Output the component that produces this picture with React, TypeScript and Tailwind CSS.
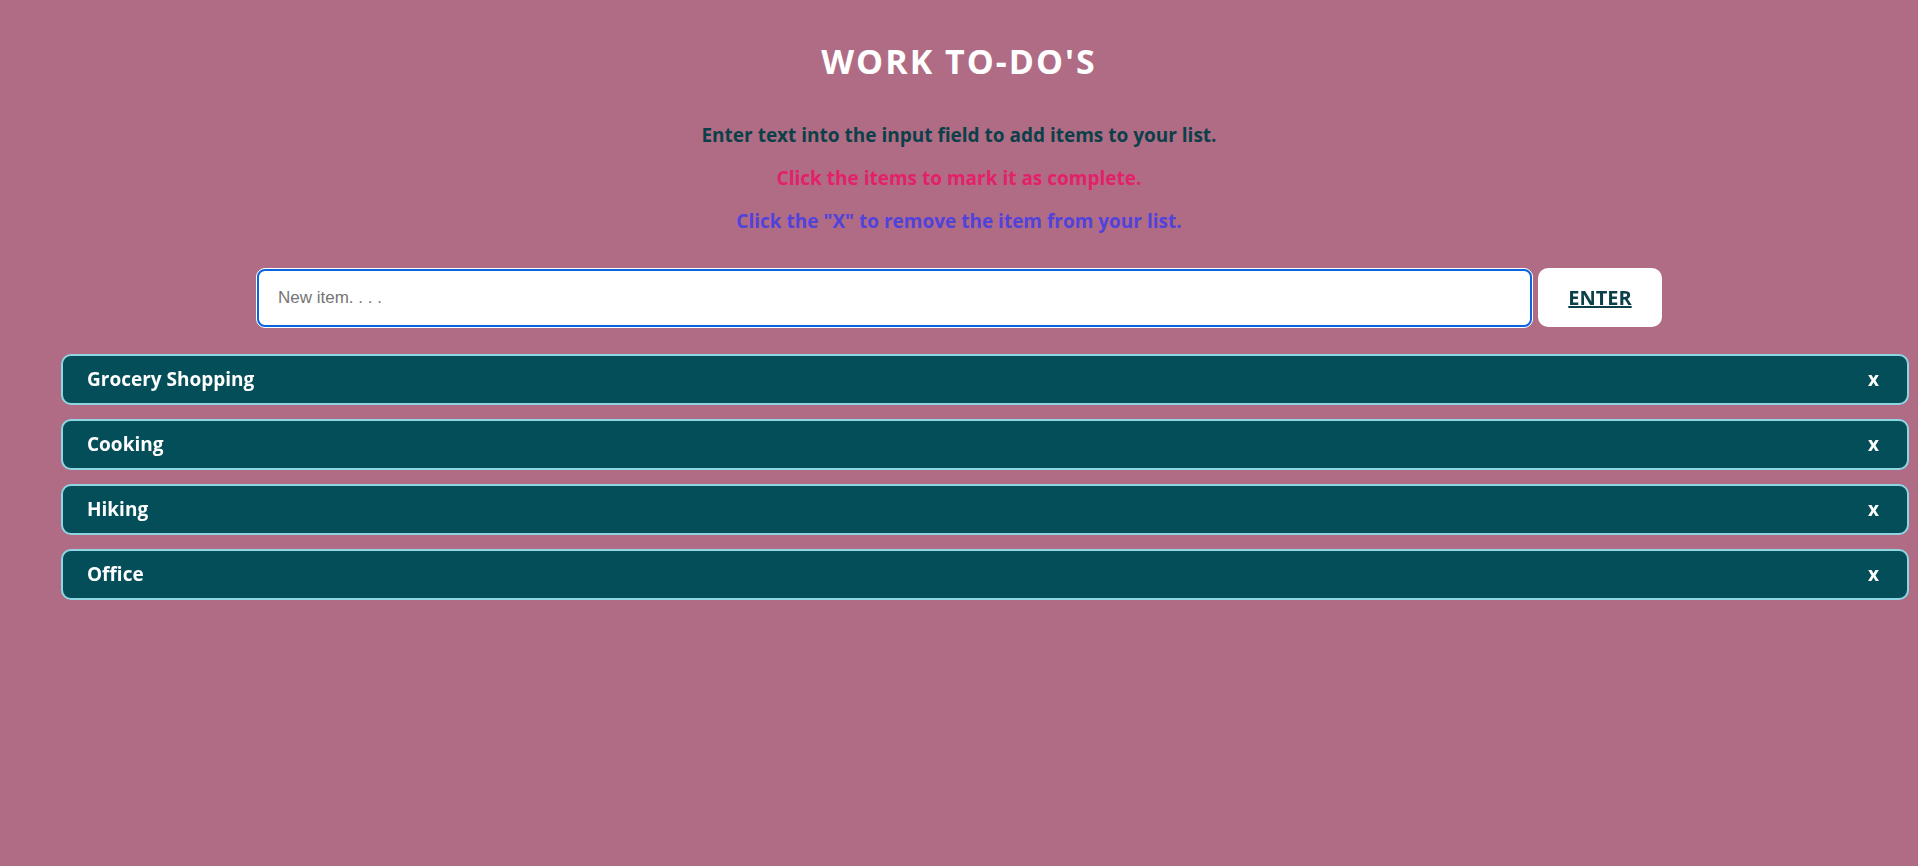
import React from "react";

const items = ["Grocery Shopping", "Cooking", "Hiking", "Office"];

export default function App() {
  return (
    <div
      className="min-h-[866px] w-full bg-[#b06c84] pt-[40px]"
      style={{ fontFamily: '"Trebuchet MS", "Open Sans", "Noto Sans", sans-serif' }}
    >
      <h1 className="text-center text-[34px] font-bold leading-[42px] tracking-[2px] text-white">WORK TO-DO'S</h1>
      <div className="mt-[42px] flex flex-col items-center gap-[21px] text-[19px] font-bold leading-[22px]">
        <p className="text-[#0b3f49]">Enter text into the input field to add items to your list.</p>
        <p className="text-[#e3206a]">Click the items to mark it as complete.</p>
        <p className="text-[#5142db]">Click the "X" to remove the item from your list.</p>
      </div>
      <div className="mt-[36px] flex justify-center gap-[5px]">
        <div className="h-[60px] w-[1277px] rounded-[9px] border border-white bg-white p-0">
          <div className="flex h-full w-full items-center rounded-[8px] border-2 border-[#0b63de] bg-white px-[19px]">
            <input
              autoFocus
              className="w-full bg-transparent text-[17px] text-[#333] caret-black outline-none placeholder:text-[#757575]"
              style={{ fontFamily: '"Liberation Sans", Arial, sans-serif' }}
              placeholder="New item. . . ."
            />
          </div>
        </div>
        <button className="h-[59px] w-[124px] rounded-[10px] bg-white text-[20px] font-bold text-[#0b3f49] underline">
          ENTER
        </button>
      </div>
      <ul className="ml-[61px] mt-[26px] flex w-[1848px] flex-col gap-[14px]">
        {items.map((it) => (
          <li
            key={it}
            className="flex h-[51px] items-center justify-between rounded-[10px] border-2 border-[#8fd6e3] bg-[#044e5a] pl-[24px] pr-[28px] text-[19px] font-bold text-white"
          >
            <span>{it}</span>
            <span>x</span>
          </li>
        ))}
      </ul>
    </div>
  );
}
